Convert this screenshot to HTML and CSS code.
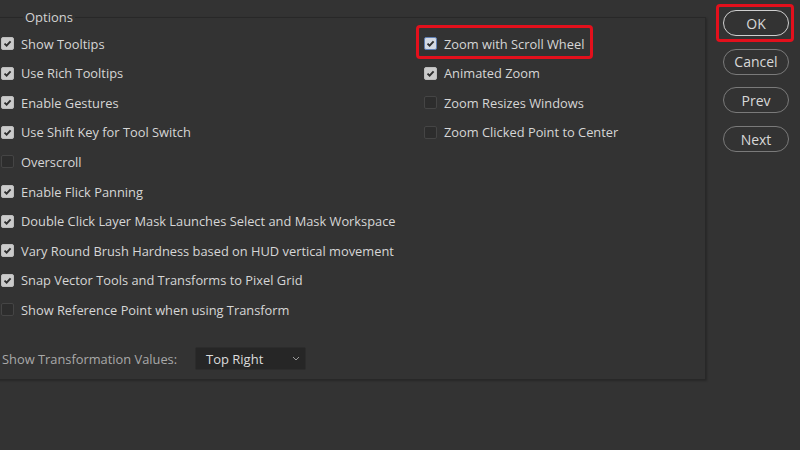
FILE: index.html
```html
<!DOCTYPE html>
<html>
<head>
<meta charset="utf-8">
<link rel="stylesheet" href="styles.css">
</head>
<body>
<div class="dialog">
  <fieldset class="panel">
    <legend class="legend">Options</legend>
    <div class="cols">
      <div class="col">
        <label class="row"><span class="cb on"></span>Show Tooltips</label>
        <label class="row"><span class="cb on"></span>Use Rich Tooltips</label>
        <label class="row"><span class="cb on"></span>Enable Gestures</label>
        <label class="row"><span class="cb on"></span>Use Shift Key for Tool Switch</label>
        <label class="row"><span class="cb"></span>Overscroll</label>
        <label class="row"><span class="cb on"></span>Enable Flick Panning</label>
        <label class="row"><span class="cb on"></span>Double Click Layer Mask Launches Select and Mask Workspace</label>
        <label class="row"><span class="cb on"></span>Vary Round Brush Hardness based on HUD vertical movement</label>
        <label class="row"><span class="cb on"></span>Snap Vector Tools and Transforms to Pixel Grid</label>
        <label class="row"><span class="cb"></span>Show Reference Point when using Transform</label>
      </div>
      <div class="col">
        <label class="row mark"><span class="cb on focus"></span>Zoom with Scroll Wheel</label>
        <label class="row"><span class="cb on"></span>Animated Zoom</label>
        <label class="row"><span class="cb"></span>Zoom Resizes Windows</label>
        <label class="row"><span class="cb"></span>Zoom Clicked Point to Center</label>
      </div>
    </div>
    <div class="select-row">
      <span class="select-label">Show Transformation Values:</span>
      <span class="select">Top Right<svg class="chev" width="8" height="5" viewBox="0 0 8 5"><polyline points="1,1 4,4 7,1" fill="none" stroke="#9a9a9a" stroke-width="1"/></svg></span>
    </div>
  </fieldset>
  <div class="buttons">
    <span class="btn-wrap mark"><button class="btn default">OK</button></span>
    <button class="btn">Cancel</button>
    <button class="btn">Prev</button>
    <button class="btn">Next</button>
  </div>
</div>
</body>
</html>
```
FILE: styles.css
```css
html, body {
  margin: 0;
  padding: 0;
  background: #333333;
  color: #d6d6d6;
  font-family: "Open Sans", "Noto Sans", sans-serif;
  font-size: 12.85px;
  overflow: hidden;
}
.dialog {
  display: flex;
  align-items: flex-start;
  width: 800px;
  height: 450px;
}
.panel {
  margin: 9px 0 0 -12px;
  padding: 0 0 0 12px;
  width: 718px;
  height: 371px;
  box-sizing: border-box;
  border: 1px solid #282828;
  box-shadow: 1px 1px 2px rgba(0,0,0,0.25);
  min-width: 0;
}
.legend {
  margin-left: 22px;
  padding: 0 2px;
  font-size: 13px;
  line-height: 16px;
  color: #d2d2d2;
}
.cols {
  display: grid;
  grid-template-columns: 423px 1fr;
  margin-top: 4px;
}
.col {
  display: flex;
  flex-direction: column;
}
.row {
  position: relative;
  display: flex;
  align-items: center;
  height: 29.56px;
  white-space: nowrap;
}
.cb {
  width: 11px;
  height: 11px;
  border: 1px solid #454545;
  border-radius: 2px;
  background: #2d2d2d;
  margin-right: 7px;
  flex: none;
}
.cb.on {
  background: #cbcbcb url("data:image/svg+xml,%3Csvg xmlns='http://www.w3.org/2000/svg' width='11' height='11' viewBox='0 0 11 11'%3E%3Cpolyline points='2.5,5.6 4.6,7.7 8.6,3.3' fill='none' stroke='%232e2e2e' stroke-width='1.9'/%3E%3C/svg%3E") center/11px 11px no-repeat;
  border-color: #bdbdbd;
}
.cb.focus {
  background-color: #d3d9e3;
  border-color: #5f7fb4;
}
.mark::after {
  content: "";
  position: absolute;
  border: 3px solid #e3101c;
  border-radius: 4px;
  pointer-events: none;
}
.row.mark::after {
  left: -8px;
  top: -4px;
  width: 171px;
  height: 28px;
}
.select-row {
  display: flex;
  align-items: center;
  margin-top: 23px;
  margin-left: 1px;
}
.select-label {
  color: #a9a9a9;
  width: 193px;
  white-space: nowrap;
}
.select {
  display: flex;
  align-items: center;
  justify-content: space-between;
  box-sizing: border-box;
  width: 111px;
  height: 23px;
  padding: 0 5px 0 10px;
  background: #262626;
  border: 1px solid #2c2c2c;
  border-radius: 2px;
  color: #dcdcdc;
  font-size: 13px;
}
.buttons {
  display: flex;
  flex-direction: column;
  gap: 12.7px;
  margin: 10px 0 0 17px;
}
.btn-wrap {
  position: relative;
  display: block;
}
.btn-wrap.mark::after {
  left: -7px;
  top: -6px;
  width: 72px;
  height: 32px;
}
.btn {
  display: block;
  width: 66px;
  height: 26px;
  border: 1.5px solid #7a7a7a;
  border-radius: 13px;
  background: #333333;
  color: #d8d8d8;
  font-family: "Open Sans", "Noto Sans", sans-serif;
  font-size: 14px;
  padding: 0;
}
.btn.default {
  border-color: #cfcfcf;
}
```
